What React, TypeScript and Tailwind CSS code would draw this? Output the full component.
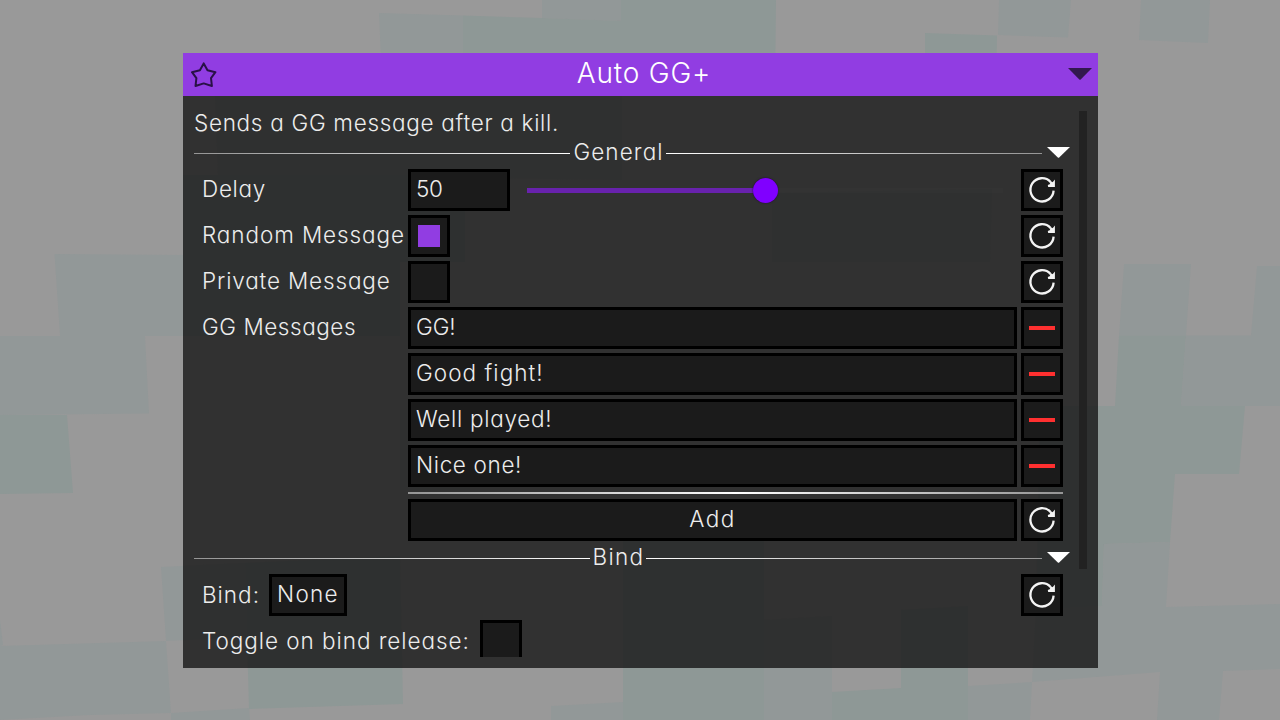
import type { ReactNode } from "react";

const MUTED = "#929898";
const TEAL = "#8e9896";

const shapes: [string, string][] = [
  ["379,13 463,15.5 463,60 381,60", MUTED],
  ["542,0 621,0 621,21 542,18", MUTED],
  ["463,15.5 542,18 621,21 621,0 776,0 775,95 463,95", TEAL],
  ["925,33 997,35.5 996,95 925,95", TEAL],
  ["999,0 1071,0 1068,37.5 998,35", MUTED],
  ["1141,0 1210,0 1208,43 1139,40", MUTED],
  ["215,95 296,95 300,175 218,175", MUTED],
  ["296,95 622,95 622,103 622,180 300,175", MUTED],
  ["772,193 992,189 990,262 772,262", MUTED],
  ["54.5,254 183,255 183,336 60,336", MUTED],
  ["183,175 465,175 465,262 400,262 400,336 183,336", TEAL],
  ["0,336 145,336 149,413.5 0,415", MUTED],
  ["0,415 67,415 73,493 0,494", TEAL],
  ["400,410 470,410 470,490 400,490", MUTED],
  ["161,567 245,563 248,637 166,641", MUTED],
  ["0,620 3,645 0,646", MUTED],
  ["0,646 166,641 171,713 90,715 0,720", MUTED],
  ["171,713 249,708 250,720 171,720", MUTED],
  ["245,563 400,556 403,704 249,709", TEAL],
  ["551,706 623,702 623,720 551,720", MUTED],
  ["623,541 764,541 764,720 623,720", TEAL],
  ["764,620 832,616 832,720 764,720", MUTED],
  ["832,692 901,688 901,610 968,606 968,720 832,720", TEAL],
  ["968,686 1032,682 1030,720 968,720", MUTED],
  ["1124,264 1191,264 1186,335.5 1119,335.5", MUTED],
  ["1119,335.5 1186,335.5 1181,406 1115,406", TEAL],
  ["1186,335.5 1251,335.5 1257,266 1280,266 1280,406 1181,406", MUTED],
  ["1040,406 1245,406 1239,474 1175,474 1170,542 1104,544 1102,606 1036,610", TEAL],
  ["1104,544 1170,542 1166,607 1280,604 1280,669 1223,671 1219,720 1157,720 1160,672 1032,682 1036,610 1102,606", MUTED],
];

function Backdrop() {
  return (
    <svg className="absolute inset-0" width="1280" height="720" viewBox="0 0 1280 720">
      {shapes.map(([points, fill]) => (
        <polygon key={points} points={points} fill={fill} />
      ))}
    </svg>
  );
}

function Star() {
  return (
    <svg className="ml-2 mt-px" width="26" height="26" viewBox="0 0 26 26" fill="none" stroke="#291146" strokeWidth="2" strokeLinejoin="round">
      <path d="M12.7 1.4 16.5 8.2 24.4 10.2 20 16.2 20.9 24 12.7 21.4 4.5 24 5.4 16.2 1 10.2 8.9 8.2Z" />
    </svg>
  );
}

function Triangle({ className }: { className: string }) {
  return (
    <svg viewBox="0 0 24 12" preserveAspectRatio="none" className={className}>
      <path d="M0 0H24L12.7 11.5Q12 12.1 11.3 11.5Z" fill="currentColor" />
    </svg>
  );
}

function Box({ className = "", children }: { className?: string; children?: ReactNode }) {
  return <div className={`flex h-[42px] shrink-0 items-center border-3 border-black bg-[#1b1b1b] ${className}`}>{children}</div>;
}

function Reset() {
  return (
    <Box className="w-[42px]">
      <svg width="36" height="36" viewBox="0 0 36 36" fill="none">
        <path d="M29.6 18.6A11.6 11.6 0 1 1 26.6 10" stroke="#f4f4f4" strokeWidth="2.3" />
        <path d="M30.9 7.6V15H24.2L23.8 13 26.2 12 25.6 10.4 27.6 9.6 28.6 10.2Z" fill="#f4f4f4" />
      </svg>
    </Box>
  );
}

function Remove() {
  return (
    <Box className="w-[42px] justify-center">
      <div className="h-1 w-[26px] bg-[#ff3030]" />
    </Box>
  );
}

function Section({ title, className = "", tracking }: { title: string; className?: string; tracking: string }) {
  return (
    <div className={`flex h-8 items-center ${className}`}>
      <div className="mt-px h-px flex-1 bg-linear-to-r from-[#959595] to-white" />
      <div className={`pl-[3px] pr-[2px] pb-[2px] ${tracking}`}>{title}</div>
      <div className="mt-px h-px flex-1 bg-linear-to-r from-white to-[#959595]" />
      <Triangle className="mb-[2px] ml-[5px] h-[11px] w-[23px] text-white" />
    </div>
  );
}

function Label({ children, className }: { children: string; className: string }) {
  return <div className={`w-[206px] shrink-0 whitespace-nowrap pb-[2px] ${className}`}>{children}</div>;
}

const messages = [
  { text: "GG!", tracking: "tracking-[-0.1px]" },
  { text: "Good fight!", tracking: "tracking-[1.05px]" },
  { text: "Well played!", tracking: "tracking-[0.7px]" },
  { text: "Nice one!", tracking: "tracking-[0.65px]" },
];

export default function App() {
  return (
    <div className="relative flex h-[720px] w-[1280px] overflow-hidden bg-[#999999] pt-[53px] font-['Inter',sans-serif] text-[22.5px] leading-[30px] font-[300] text-[#ececec] [font-feature-settings:'cv11']">
      <Backdrop />
      <div className="relative ml-[183px] flex h-[615px] w-[915px] flex-col">
        <header className="flex h-[43px] shrink-0 items-center bg-[#913de2]">
          <Star />
          <div className="ml-[6px] flex-1 pb-[3px] pr-[3px] text-center text-[28px] tracking-[0.8px] text-white">Auto GG+</div>
          <Triangle className="mr-[6px] mb-px h-3 w-6 text-[#32184f]" />
        </header>
        <div className="flex min-h-0 flex-1 bg-[#161616]/80 pb-[11px] pl-[11px]">
          <div className="w-[876px] shrink-0 overflow-hidden pt-[12px]">
            <div className="h-[29px] tracking-[0.7px]">Sends a GG message after a kill.</div>
            <Section title="General" tracking="tracking-[1.1px]" />
            <div className="flex flex-col gap-1 pr-[7px] pl-2">
              <div className="flex items-center">
                <Label className="tracking-[0.7px]">Delay</Label>
                <Box className="w-[102px] pb-[2px] pl-[5px] tracking-[-0.3px]">50</Box>
                <div className="ml-[17px] flex h-[42px] flex-1 items-center pt-px">
                  <div className="h-[5px] w-[226px] bg-[#6822ad]" />
                  <div className="size-[25px] rounded-full bg-[#8000ff] shadow-[0_0_2px_#220044]" />
                  <div className="h-[5px] w-[225px] bg-[#3c3c3c]/20" />
                </div>
                <Reset />
              </div>
              <div className="flex items-center">
                <Label className="tracking-[0.9px]">Random Message</Label>
                <Box className="w-[42px] justify-center">
                  <div className="size-[22px] bg-[#913de2]" />
                </Box>
                <div className="flex-1" />
                <Reset />
              </div>
              <div className="flex items-center">
                <Label className="tracking-[0.85px]">Private Message</Label>
                <Box className="w-[42px]" />
                <div className="flex-1" />
                <Reset />
              </div>
              <div className="flex">
                <Label className="pt-[5px] tracking-[0.55px]">GG Messages</Label>
                <div className="flex flex-1 flex-col gap-1">
                  {messages.map((m) => (
                    <div key={m.text} className="flex gap-1">
                      <Box className={`w-[609px] pb-[2px] pl-[5px] ${m.tracking}`}>{m.text}</Box>
                      <Remove />
                    </div>
                  ))}
                  <div className="my-px h-[2px] bg-linear-to-r from-[#959595] via-white to-[#959595]" />
                  <div className="flex gap-1">
                    <Box className="w-[609px] justify-center pb-[2px] tracking-[1.5px]">Add</Box>
                    <Reset />
                  </div>
                </div>
              </div>
            </div>
            <Section title="Bind" className="mt-px" tracking="tracking-[1.3px]" />
            <div className="flex flex-col gap-1 pr-[7px] pl-2">
              <div className="flex items-center">
                <div className="w-[67px] tracking-[1px]">Bind:</div>
                <Box className="w-[78px] pb-[2px] pl-[5px] tracking-[1.3px]">None</Box>
                <div className="flex-1" />
                <Reset />
              </div>
              <div className="flex items-center">
                <div className="w-[278px] whitespace-nowrap tracking-[0.95px]">Toggle on bind release:</div>
                <Box className="w-[42px]" />
              </div>
            </div>
          </div>
          <div className="mt-[15px] ml-[9px] h-[458px] w-2 bg-[#222222]" />
        </div>
      </div>
    </div>
  );
}
